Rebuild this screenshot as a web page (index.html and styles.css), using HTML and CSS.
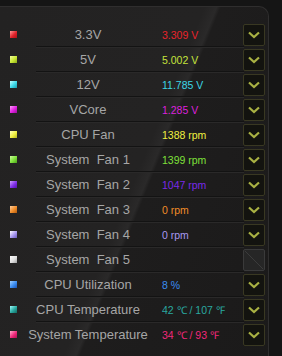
FILE: index.html
```html
<!DOCTYPE html>
<html lang="en">
<head>
  <meta charset="UTF-8" />
  <title>Hardware Monitor</title>
  <link rel="stylesheet" href="styles.css">
</head>
<body>
  <div class="panel">
    <div class="row"><span class="dot red"></span><span class="label">3.3V</span><span class="value t-red">3.309 V</span><button class="drop"><svg viewBox="0 0 12 8"><path d="M1 1.5 L6 6 L11 1.5"/></svg></button></div>
    <div class="row"><span class="dot lime"></span><span class="label">5V</span><span class="value t-lime">5.002 V</span><button class="drop"><svg viewBox="0 0 12 8"><path d="M1 1.5 L6 6 L11 1.5"/></svg></button></div>
    <div class="row"><span class="dot cyan"></span><span class="label">12V</span><span class="value t-cyan">11.785 V</span><button class="drop"><svg viewBox="0 0 12 8"><path d="M1 1.5 L6 6 L11 1.5"/></svg></button></div>
    <div class="row"><span class="dot magenta"></span><span class="label">VCore</span><span class="value t-magenta">1.285 V</span><button class="drop"><svg viewBox="0 0 12 8"><path d="M1 1.5 L6 6 L11 1.5"/></svg></button></div>
    <div class="row"><span class="dot yellow"></span><span class="label">CPU Fan</span><span class="value t-yellow">1388 rpm</span><button class="drop"><svg viewBox="0 0 12 8"><path d="M1 1.5 L6 6 L11 1.5"/></svg></button></div>
    <div class="row"><span class="dot green"></span><span class="label">System  Fan 1</span><span class="value t-green">1399 rpm</span><button class="drop"><svg viewBox="0 0 12 8"><path d="M1 1.5 L6 6 L11 1.5"/></svg></button></div>
    <div class="row"><span class="dot purple"></span><span class="label">System  Fan 2</span><span class="value t-purple">1047 rpm</span><button class="drop"><svg viewBox="0 0 12 8"><path d="M1 1.5 L6 6 L11 1.5"/></svg></button></div>
    <div class="row"><span class="dot orange"></span><span class="label">System  Fan 3</span><span class="value t-orange">0 rpm</span><button class="drop"><svg viewBox="0 0 12 8"><path d="M1 1.5 L6 6 L11 1.5"/></svg></button></div>
    <div class="row"><span class="dot lavender"></span><span class="label">System  Fan 4</span><span class="value t-lavender">0 rpm</span><button class="drop"><svg viewBox="0 0 12 8"><path d="M1 1.5 L6 6 L11 1.5"/></svg></button></div>
    <div class="row"><span class="dot white"></span><span class="label">System  Fan 5</span><span class="value"></span><button class="drop off"><svg viewBox="0 0 22 22"><path d="M1 1 L21 21"/></svg></button></div>
    <div class="row"><span class="dot blue"></span><span class="label">CPU Utilization</span><span class="value t-blue">8 %</span><button class="drop"><svg viewBox="0 0 12 8"><path d="M1 1.5 L6 6 L11 1.5"/></svg></button></div>
    <div class="row"><span class="dot teal"></span><span class="label">CPU Temperature</span><span class="value t-teal">42 ℃ / 107 ℉</span><button class="drop"><svg viewBox="0 0 12 8"><path d="M1 1.5 L6 6 L11 1.5"/></svg></button></div>
    <div class="row last"><span class="dot pink"></span><span class="label">System Temperature</span><span class="value t-pink">34 ℃ / 93 ℉</span><button class="drop"><svg viewBox="0 0 12 8"><path d="M1 1.5 L6 6 L11 1.5"/></svg></button></div>
  </div>
</body>
</html>
```

FILE: styles.css
```css
html, body {
  height: 100%;
}
body {
  margin: 0;
  background-color: #151515;
  font-family: "Liberation Sans", Arial, sans-serif;
  overflow: hidden;
}
.panel {
  margin: 6px 13px 0 0;
  height: 350px;
  box-sizing: border-box;
  padding-top: 15px;
  border-top: 1px solid #2f2e2e;
  border-right: 1px solid #2f2e2e;
  border-top-right-radius: 10px;
  background: linear-gradient(112deg, #232222 0%, #242323 50%, #2a2929 53%, #1e1d1d 54%, #1b1a1a 100%);
}
.row {
  display: grid;
  grid-template-columns: 10px 8px 140px 85px 22px;
  align-items: center;
  height: 25px;
  position: relative;
}
.row::after {
  content: "";
  position: absolute;
  left: 36px;
  right: 24px;
  bottom: 0;
  height: 1px;
  background: #131313;
  box-shadow: 0 1px 0 #2a2929;
}
.row.last::after {
  display: none;
}
.dot {
  grid-column: 2;
  width: 7px;
  height: 7px;
}
.label {
  text-align: center;
  font-size: 13px;
  color: #a6a6a6;
  white-space: pre;
}
.value {
  padding-left: 4px;
  font-size: 10.5px;
  white-space: nowrap;
}
.drop {
  width: 22px;
  height: 22px;
  padding: 0;
  border: 1px solid #393822;
  border-radius: 2px;
  background: #13130f;
  display: flex;
  align-items: center;
  justify-content: center;
}
.drop svg {
  width: 12px;
  height: 8px;
  fill: none;
  stroke: #a9b143;
  stroke-width: 2.2;
}
.drop.off {
  border-color: #3a3a3a;
  background: #262626;
}
.drop.off svg {
  width: 20px;
  height: 20px;
  stroke: #3e3e3e;
  stroke-width: 1;
}
.red { background: linear-gradient(135deg, #ff9a9a, #e0222a 55%, #a81018); }
.lime { background: linear-gradient(135deg, #f4ffa0, #c8e632 55%, #8aa81a); }
.cyan { background: linear-gradient(135deg, #c0ffff, #3cd8e8 55%, #1a98a8); }
.magenta { background: linear-gradient(135deg, #ffa0ff, #e020e0 55%, #9a109a); }
.yellow { background: linear-gradient(135deg, #ffffc0, #f0f040 55%, #b0b020); }
.green { background: linear-gradient(135deg, #d0ffa0, #7ee03a 55%, #4aa01a); }
.purple { background: linear-gradient(135deg, #d0a0ff, #8030e8 55%, #5010a8); }
.orange { background: linear-gradient(135deg, #ffd0a0, #f08c28 55%, #b05a10); }
.lavender { background: linear-gradient(135deg, #ffffff, #a898f0 55%, #6858b8); }
.white { background: linear-gradient(135deg, #ffffff, #e0e0e0 55%, #a0a0a0); }
.blue { background: linear-gradient(135deg, #a0d0ff, #3a8cf0 55%, #1a50b0); }
.teal { background: linear-gradient(135deg, #a0ffff, #2aa8a0 55%, #106860); }
.pink { background: linear-gradient(135deg, #ffb0d0, #f0287a 55%, #a81050); }
.t-red { color: #e8232b; }
.t-lime { color: #c4e43c; }
.t-cyan { color: #3cd6e6; }
.t-magenta { color: #dc22dc; }
.t-yellow { color: #f0f040; }
.t-green { color: #7ee03a; }
.t-purple { color: #7a2ae8; }
.t-orange { color: #f08c28; }
.t-lavender { color: #a898f0; }
.t-blue { color: #3a8cf0; }
.t-teal { color: #2aa8a0; }
.t-pink { color: #f0287a; }
```
